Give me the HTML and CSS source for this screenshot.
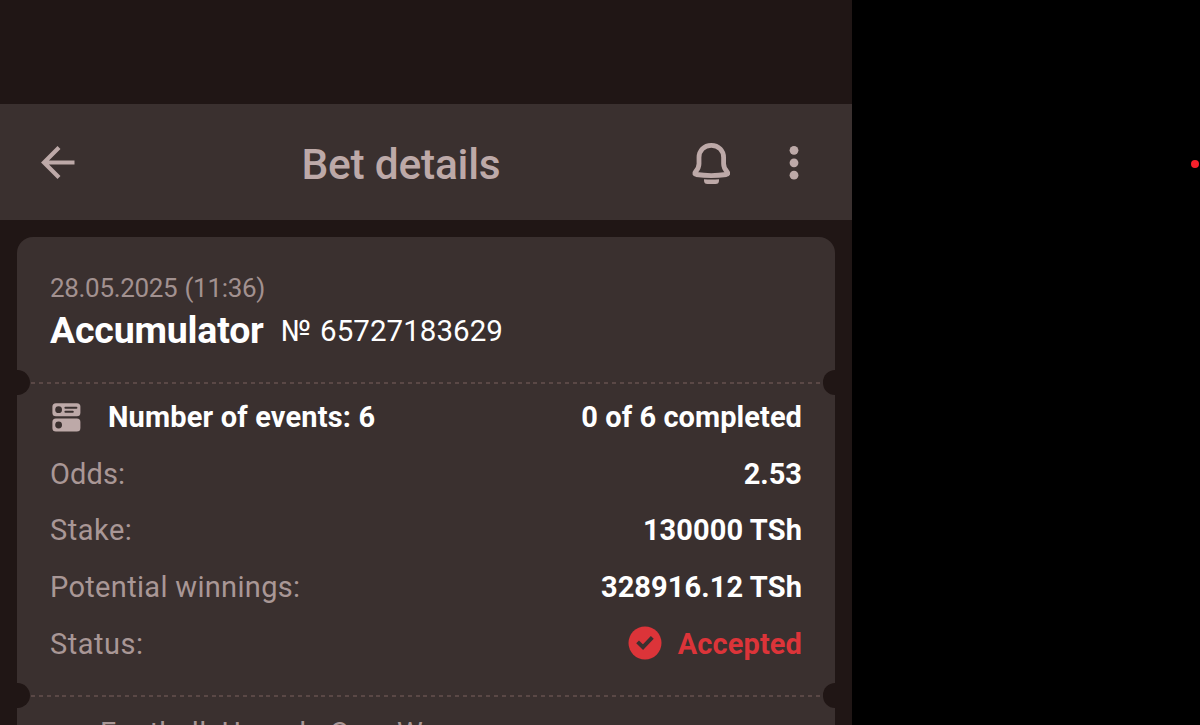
FILE: index.html
```html
<!DOCTYPE html>
<html lang="en">
<head>
<meta charset="utf-8">
<title>Bet details</title>
<link rel="stylesheet" href="styles.css">
</head>
<body>
<div class="screen">
  <main class="app">
    <header class="bar">
      <svg class="back" viewBox="0 0 36 36" width="36" height="36"><path d="M34.500 17.500H4.500M19 2.500L4 17.500l15 15" /></svg>
      <h1 class="title">Bet details</h1>
      <svg class="bell" viewBox="0 0 42 44" width="42" height="44">
        <path class="bell-body" d="M21.300 4.300c-7.400 0-12.300 5.500-12.300 12.200v6.300c0 3.900-1.400 5.800-3.600 8.100-1.300 1.400-.7 2.300.9 2.600 9.700 1.400 20.300 1.400 30 0 1.600-.3 2.200-1.200.9-2.600-2.200-2.300-3.600-4.200-3.600-8.100v-6.300C33.600 9.800 28.700 4.300 21.300 4.300z"/>
        <path class="bell-clapper" d="M14 38.200q7.500.8 15 0v1.400a3.500 3.500 0 0 1-3.500 3.500h-8a3.500 3.500 0 0 1-3.500-3.500z"/>
      </svg>
      <svg class="more" viewBox="0 0 10 36" width="10" height="36"><circle cx="5" cy="5.300" r="4.400"/><circle cx="5" cy="17.800" r="4.400"/><circle cx="5" cy="30.200" r="4.400"/></svg>
    </header>
    <article class="ticket">
      <section class="summary">
        <p class="date">28.05.2025 (11:36)</p>
        <div class="heading">
          <h2 class="kind">Accumulator</h2>
          <span class="number">№ 65727183629</span>
        </div>
      </section>
      <div class="tear"></div>
      <section class="details">
        <div class="row">
          <svg class="events" viewBox="0 0 29 29" width="29" height="29">
            <rect class="fill" x=".4" y=".2" width="28" height="13" rx="3.500"/>
            <rect class="fill" x=".4" y="15.400" width="28" height="13" rx="3.500"/>
            <circle class="hole" cx="6.600" cy="6.700" r="3.400"/><circle class="hole" cx="6.600" cy="22" r="3.400"/>
            <path class="line" d="M13.400 4.700h11M13.400 8.800h7.400"/>
          </svg>
          <span class="count">Number of events: 6</span>
          <span class="value done">0 of 6 completed</span>
        </div>
        <div class="row"><span class="label odds">Odds:</span><span class="value">2.53</span></div>
        <div class="row"><span class="label stake">Stake:</span><span class="value money">130000 TSh</span></div>
        <div class="row"><span class="label">Potential winnings:</span><span class="value money">328916.12 TSh</span></div>
        <div class="row"><span class="label stake">Status:</span>
          <span class="value status"><svg viewBox="0 0 34 34" width="34" height="34"><circle cx="17" cy="17" r="16.500"/><path d="M9.600 15.900l5.400 5.200 9.300-9.700"/></svg><span class="accepted">Accepted</span></span>
        </div>
      </section>
      <div class="tear"></div>
      <section class="event"><p class="league">Football. Uganda Cup. Women</p></section>
    </article>
  </main>
  <span class="marker"></span>
</div>
</body>
</html>
```

FILE: styles.css
```css
* { box-sizing: border-box; margin: 0; padding: 0; }
body { background: #000; overflow: hidden; font-family: Roboto, "Liberation Sans", sans-serif; }
.screen { position: relative; width: 1200px; height: 725px; overflow: hidden; }
.app { width: 852px; height: 725px; padding-top: 104px; background: #201615; overflow: hidden; }
svg { display: block; flex: none; }
.bar { display: flex; align-items: center; height: 116px; padding: 1px 53px 0 40px; background: #3a302f; }
.back { fill: none; stroke: #bda9a8; stroke-width: 4.200; }
.title { flex: 1; margin-left: 225.500px; padding-top: 5px; font-size: 42.500px; line-height: 50px; font-weight: 500; letter-spacing: -0.250px; color: #bda9a8; white-space: nowrap; }
.bell { margin-right: 57px; }
.bell-body { fill: none; stroke: #bda9a8; stroke-width: 4.800; stroke-linejoin: round; }
.bell-clapper, .more { fill: #bda9a8; }
.ticket { width: 818px; height: 520px; margin: 17px 0 0 17px; border-radius: 16px 16px 0 0; background: #3a302f; overflow: hidden; color: #fff; }
.summary { height: 132.500px; padding: 36px 33px 0; }
.date { font-size: 26px; line-height: 30px; letter-spacing: -0.320px; word-spacing: 1px; color: #a29190; white-space: nowrap; }
.heading { display: flex; align-items: flex-start; height: 50px; padding-top: 5px; white-space: nowrap; }
.kind { font-size: 37.500px; font-weight: 700; line-height: 44px; letter-spacing: -0.200px; }
.number { margin-left: 17px; padding-top: 1px; font-size: 29.500px; line-height: 44px; letter-spacing: 0.050px; word-spacing: 1.600px; }
.tear { display: flex; align-items: center; justify-content: space-between; height: 25px; background: repeating-linear-gradient(90deg, #5a4846 0 4px, transparent 4px 7.850px) 14px 12px / 791px 2px no-repeat; }
.tear::before, .tear::after { content: ""; width: 12.500px; height: 25px; background: #201615; border-radius: 0 12.500px 12.500px 0; }
.tear::after { border-radius: 12.500px 0 0 12.500px; }
.details { height: 294px; margin-top: -6px; padding: 0 33px; }
.row { display: flex; align-items: center; height: 56.700px; font-size: 29px; line-height: 34px; white-space: nowrap; }
.label { color: #a99796; letter-spacing: 0.320px; }
.odds { letter-spacing: 0.100px; }
.stake { letter-spacing: 0.500px; }
.value { margin-left: auto; font-weight: 700; }
.done { letter-spacing: 0.060px; }
.money { letter-spacing: 0.100px; }
.events { margin: 1px 27px 0 2px; }
.fill { fill: #bda9a8; }
.hole { fill: #3a302f; }
.line { fill: none; stroke: #3a302f; stroke-width: 2; stroke-linecap: round; }
.count { font-weight: 700; letter-spacing: 0.160px; }
.status { display: flex; align-items: center; gap: 16px; color: #dc3439; }
.status svg { margin-bottom: 2px; }
.accepted { letter-spacing: 0.100px; }
.status circle { fill: #dc3439; }
.status path { fill: none; stroke: #3a302f; stroke-width: 4; }
.event { padding: 8px 83px; }
.league { font-size: 29px; line-height: 34px; letter-spacing: 0.250px; white-space: nowrap; color: #a99796; }
.marker { position: absolute; left: 1191px; top: 160px; width: 8px; height: 8px; border-radius: 50%; background: #f5202b; }
```
